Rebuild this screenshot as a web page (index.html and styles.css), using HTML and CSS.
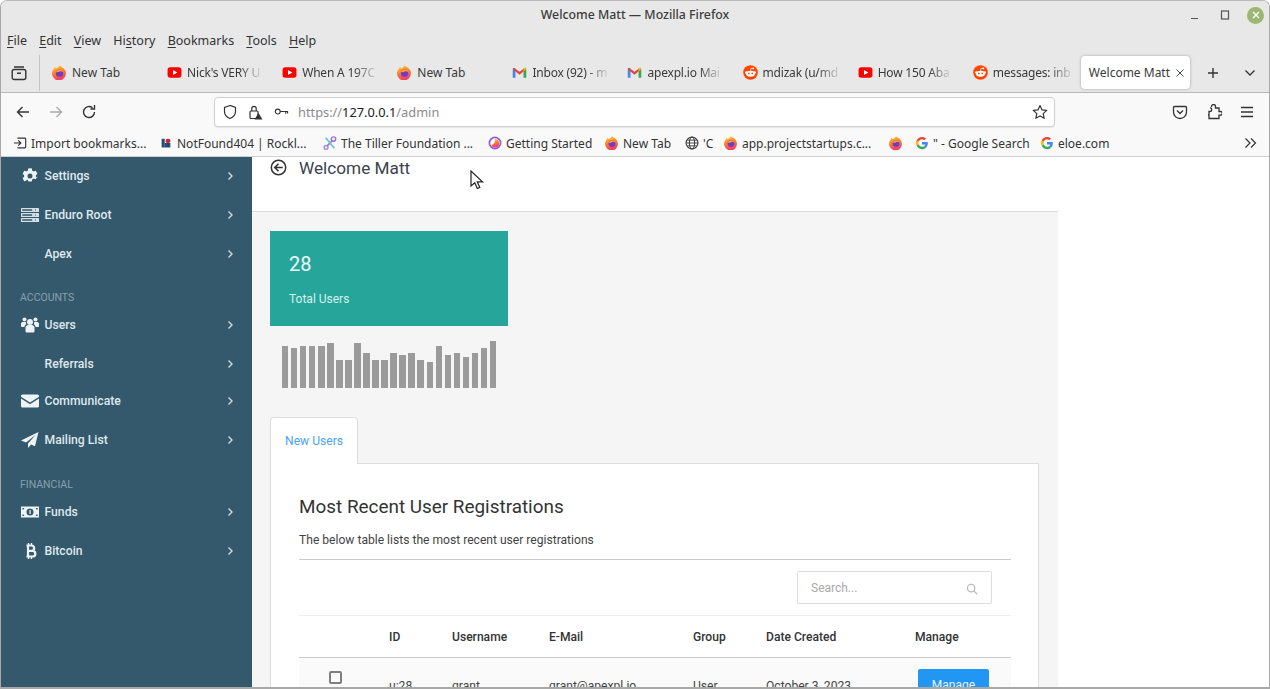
FILE: index.html
```html
<!DOCTYPE html>
<html lang="en">
<head>
<meta charset="utf-8">
<title>Welcome Matt — Mozilla Firefox</title>
<link rel="stylesheet" href="styles.css">
</head>
<body>
<svg class="defs" width="0" height="0" aria-hidden="true">
  <defs>
    <linearGradient id="fxg" x1="0.2" y1="0" x2="0.5" y2="1"><stop offset="0" stop-color="#ffcb2e"/><stop offset="0.5" stop-color="#ff7a2b"/><stop offset="1" stop-color="#f0386b"/></linearGradient>
    <symbol id="fx" viewBox="0 0 16 16"><path d="M8 .4c1.200 1.500 3.300 1.700 4.600 3.400A7.400 7.400 0 1 1 2 4C2.300 2.800 3 2.200 3.500 2c0 1 .4 1.500 1 1.800C5.500 2.800 7 2.200 8 .4z" fill="url(#fxg)"/><circle cx="8" cy="8.700" r="3.900" fill="#6f3cc7"/><path d="M4.300 7.700C5 5.500 8 4 10.600 5.600c1 .6 1.500 1.500 1.400 2.500-1-1.700-2.800-1.900-3.800-1.100-1.200.6-2.800.8-3.900.7z" fill="#ffa62e"/></symbol>
    <symbol id="yt" viewBox="0 0 16 16"><rect x=".6" y="2.500" width="14.800" height="11" rx="2.800" fill="#f00"/><path d="M6.400 5.300v5.400l4.600-2.700z" fill="#fff"/></symbol>
    <symbol id="gm" viewBox="0 0 16 16"><path d="M.8 13.500V4.300L2 2.800l1.700 1v9.700z" fill="#4285f4"/><path d="M12.300 13.500V3.800l1.700-1 1.200 1.500v9.200z" fill="#34a853"/><path d="M2 2.800 8 7.300l6-4.500L12.300 7 8 10.300 3.700 7 .8 4.300z" fill="#ea4335"/><path d="M12.300 3.800 14 2.800 15.200 4.300 12.300 7z" fill="#fbbc05"/></symbol>
    <symbol id="rd" viewBox="0 0 16 16"><circle cx="8" cy="8" r="7.800" fill="#ff4500"/><ellipse cx="8" cy="9.400" rx="4.800" ry="3.200" fill="#fff"/><circle cx="3.500" cy="8" r="1.300" fill="#fff"/><circle cx="12.500" cy="8" r="1.300" fill="#fff"/><circle cx="6.200" cy="9" r=".9" fill="#ff4500"/><circle cx="9.800" cy="9" r=".9" fill="#ff4500"/><circle cx="11" cy="3.600" r="1" fill="#fff"/><path d="M8 6.500 8.600 3.500l2.400.2" fill="none" stroke="#fff" stroke-width=".7"/></symbol>
    <symbol id="gg" viewBox="0 0 16 16"><path d="M14.600 8.200c0-.5 0-1-.1-1.400H8v2.800h3.700c-.2.900-.7 1.600-1.400 2.100l2.200 1.700c1.300-1.200 2.100-3 2.100-5.200z" fill="#4285f4"/><path d="M8 15c1.900 0 3.400-.6 4.500-1.700l-2.200-1.700c-.6.400-1.400.7-2.300.7-1.800 0-3.300-1.200-3.900-2.800L1.900 11.200C3 13.500 5.300 15 8 15z" fill="#34a853"/><path d="M4.100 9.500C4 9 3.900 8.500 3.900 8s.1-1 .2-1.500L1.900 4.800C1.300 5.800 1 6.900 1 8s.3 2.200.9 3.200z" fill="#fbbc05"/><path d="M8 3.800c1 0 1.900.4 2.600 1l2-2C11.400 1.700 9.800 1 8 1 5.300 1 3 2.500 1.900 4.800l2.200 1.700C4.700 4.900 6.200 3.800 8 3.800z" fill="#ea4335"/></symbol>
    <symbol id="chev" viewBox="0 0 8 10"><path d="M2.500 1.500 6 5 2.500 8.500" fill="none" stroke="currentColor" stroke-width="1.400"/></symbol>
  </defs>
</svg>

<div class="window">
  <header class="titlebar">
    <span></span>
    <span class="title">Welcome Matt — Mozilla Firefox</span>
    <div class="controls">
      <svg class="ctl" viewBox="0 0 12 12"><path d="M2 9.500h7" stroke="#555" stroke-width="1.200"/></svg>
      <svg class="ctl" viewBox="0 0 12 12"><rect x="2.500" y="2" width="7" height="8" fill="none" stroke="#555" stroke-width="1.200"/></svg>
      <span class="close"><svg viewBox="0 0 12 12"><path d="M3 3l6 6M9 3l-6 6" stroke="#fff" stroke-width="1.300"/></svg></span>
    </div>
  </header>

  <nav class="menubar">
    <span><u>F</u>ile</span><span><u>E</u>dit</span><span><u>V</u>iew</span><span>Hi<u>s</u>tory</span><span><u>B</u>ookmarks</span><span><u>T</u>ools</span><span><u>H</u>elp</span>
  </nav>

  <div class="tabbar">
    <div class="tabview">
      <svg viewBox="0 0 16 16" class="ico16"><rect x="1.200" y="4.500" width="13.600" height="10" rx="2" fill="none" stroke="#333" stroke-width="1.400"/><path d="M3 2h10M6 8.200h4" fill="none" stroke="#333" stroke-width="1.400"/></svg>
    </div>
    <div class="tabs">
      <div class="tab"><svg class="fav"><use href="#fx"/></svg><span class="tabtext plain">New Tab</span></div>
      <div class="tab"><svg class="fav"><use href="#yt"/></svg><span class="tabtext">Nick's VERY U</span></div>
      <div class="tab"><svg class="fav"><use href="#yt"/></svg><span class="tabtext">When A 197C</span></div>
      <div class="tab"><svg class="fav"><use href="#fx"/></svg><span class="tabtext plain">New Tab</span></div>
      <div class="tab"><svg class="fav"><use href="#gm"/></svg><span class="tabtext">Inbox (92) - m</span></div>
      <div class="tab"><svg class="fav"><use href="#gm"/></svg><span class="tabtext">apexpl.io Mai</span></div>
      <div class="tab"><svg class="fav"><use href="#rd"/></svg><span class="tabtext">mdizak (u/md</span></div>
      <div class="tab"><svg class="fav"><use href="#yt"/></svg><span class="tabtext">How 150 Aba</span></div>
      <div class="tab"><svg class="fav"><use href="#rd"/></svg><span class="tabtext">messages: inb</span></div>
      <div class="tab active"><span class="activetext">Welcome Matt</span><svg class="tabx" viewBox="0 0 10 10"><path d="M1.500 1.500l7 7M8.500 1.500l-7 7" stroke="#444" stroke-width="1"/></svg></div>
    </div>
    <svg class="newtab" viewBox="0 0 12 12"><path d="M6 1v10M1 6h10" stroke="#333" stroke-width="1.400"/></svg>
    <svg class="alltabs" viewBox="0 0 12 12"><path d="M1.500 3.500 6 8l4.500-4.500" fill="none" stroke="#333" stroke-width="1.300"/></svg>
  </div>

  <div class="navbar">
    <svg class="navico" viewBox="0 0 16 16"><path d="M14 8H2.500M7.500 3l-5 5 5 5" fill="none" stroke="#333" stroke-width="1.400"/></svg>
    <svg class="navico" viewBox="0 0 16 16"><path d="M2 8h11.500M8.500 3l5 5-5 5" fill="none" stroke="#aaa" stroke-width="1.400"/></svg>
    <svg class="navico" viewBox="0 0 16 16"><path d="M13.500 8A5.500 5.500 0 1 1 11.500 3.800M13.500 1v4h-4" fill="none" stroke="#333" stroke-width="1.400"/></svg>
    <div class="urlbar">
      <svg class="urlico" viewBox="0 0 16 16"><path d="M8 1.500 2.500 3.500v4c0 3.500 2.500 5.800 5.500 7 3-1.200 5.500-3.500 5.500-7v-4z" fill="none" stroke="#333" stroke-width="1.200"/></svg>
      <svg class="urlico" viewBox="0 0 16 16"><rect x="3" y="7" width="8" height="7.500" rx="1" fill="none" stroke="#333" stroke-width="1.200"/><path d="M4.800 7V4.500a2.200 2.200 0 0 1 4.400 0V7" fill="none" stroke="#333" stroke-width="1.200"/><path d="M11.500 9 15.500 15.500h-8z" fill="#333"/></svg>
      <svg class="urlkey" viewBox="0 0 16 16"><circle cx="4" cy="8" r="2.600" fill="none" stroke="#333" stroke-width="1.200"/><path d="M6.600 8H15M12.500 8v2.500M14.500 8v2" fill="none" stroke="#333" stroke-width="1.200"/></svg>
      <span class="url"><span class="dim">https://</span>127.0.0.1<span class="dim">/admin</span></span>
      <svg class="star" viewBox="0 0 16 16"><path d="M8 1.500l2 4.400 4.700.5-3.500 3.200 1 4.700L8 11.900l-4.200 2.400 1-4.700L1.300 6.400 6 5.900z" fill="none" stroke="#333" stroke-width="1.200" stroke-linejoin="round"/></svg>
    </div>
    <div class="navright">
      <svg class="navico2" viewBox="0 0 16 16"><path d="M2.500 2.500h11a1 1 0 0 1 1 1V8a6.500 6.500 0 0 1-13 0V3.500a1 1 0 0 1 1-1z" fill="none" stroke="#333" stroke-width="1.300"/><path d="M5 6.500l3 3 3-3" fill="none" stroke="#333" stroke-width="1.300"/></svg>
      <svg class="navico2" viewBox="0 0 16 16"><path d="M6 3.500V3a2 2 0 0 1 4 0v1.500h3.500V8H15a1.800 1.800 0 0 1 0 3.600h-1.500V15H3.500v-3.500H2.500M3.500 11.500V8h1a1.800 1.800 0 0 0 0-3.600" fill="none" stroke="#333" stroke-width="1.300" transform="translate(-.5 -.5)"/></svg>
      <svg class="navico2" viewBox="0 0 16 16"><path d="M2 3.500h12M2 8h12M2 12.500h12" stroke="#333" stroke-width="1.400"/></svg>
    </div>
  </div>

  <div class="bookmarks">
    <div class="bm bm-a"><svg class="bmico" viewBox="0 0 16 16"><path d="M1 8h8M6 5l3 3-3 3M5 2.500h8.500a1 1 0 0 1 1 1v9a1 1 0 0 1-1 1H5" fill="none" stroke="#333" stroke-width="1.300"/></svg><span>Import bookmarks...</span></div>
    <div class="bm bm-b"><svg class="bmico" viewBox="0 0 16 16"><rect x="1" y="1" width="14" height="14" rx="1" fill="#fff"/><path d="M3 3h3.500v10H3z" fill="#234a78"/><path d="M6.500 8H13v5H6.500z" fill="#234a78"/><rect x="7.500" y="3" width="5.500" height="5" rx="2" fill="#d0233a"/></svg><span>NotFound404 | Rockl...</span></div>
    <div class="bm bm-c"><svg class="bmico" viewBox="0 0 16 16"><circle cx="12" cy="3.500" r="2.500" fill="none" stroke="#9a6fd8" stroke-width="1.700"/><circle cx="3.500" cy="13" r="2.200" fill="none" stroke="#a48bdc" stroke-width="1.700"/><path d="M10.500 5.500 5 11" stroke="#9a6fd8" stroke-width="1.800"/><path d="M3 2l10 12" stroke="#62c6cf" stroke-width="2"/></svg><span>The Tiller Foundation ...</span></div>
    <div class="bm bm-d"><svg class="bmico" viewBox="0 0 16 16"><circle cx="8" cy="8" r="6.400" fill="#fff" stroke="#8a5cf0" stroke-width="2"/><path d="M8 3.500a4.800 4.800 0 1 1-4.300 6.800A6 6 0 0 0 8 3.500z" fill="url(#fxg)"/></svg><span>Getting Started</span></div>
    <div class="bm bm-e"><svg class="bmico"><use href="#fx"/></svg><span>New Tab</span></div>
    <div class="bm bm-f"><svg class="bmico" viewBox="0 0 16 16"><circle cx="8" cy="8" r="6.800" fill="none" stroke="#333" stroke-width="1.200"/><ellipse cx="8" cy="8" rx="3" ry="6.800" fill="none" stroke="#333" stroke-width="1.100"/><path d="M1.500 8h13M2.500 4.700h11M2.500 11.300h11" stroke="#333" stroke-width="1"/></svg><span>'C</span></div>
    <div class="bm bm-g"><svg class="bmico"><use href="#fx"/></svg><span>app.projectstartups.c...</span></div>
    <div class="bm bm-h"><svg class="bmico"><use href="#fx"/></svg></div>
    <div class="bm bm-i"><svg class="bmico"><use href="#gg"/></svg><span>" - Google Search</span></div>
    <div class="bm bm-j"><svg class="bmico"><use href="#gg"/></svg><span>eloe.com</span></div>
    <svg class="bmmore" viewBox="0 0 14 12"><path d="M1.500 1.500 6 6l-4.500 4.500M7 1.500 11.500 6 7 10.500" fill="none" stroke="#333" stroke-width="1.200"/></svg>
  </div>

  <div class="page">
    <aside class="sidebar">
      <a class="item">
        <svg class="sico" viewBox="-32 0 576 512"><path fill="currentColor" d="M487 315l-42-25a192 192 0 0 0 0-68l42-25c5-3 7-8 5-14a248 248 0 0 0-55-95c-4-4-10-5-15-2l-42 25a188 188 0 0 0-59-34V28c0-6-4-10-9-11a250 250 0 0 0-110 0c-5 1-9 5-9 11v49a194 194 0 0 0-59 34L92 86c-5-3-11-2-15 2a246 246 0 0 0-55 95c-2 6 0 11 5 14l42 25a192 192 0 0 0 0 68l-42 25c-5 3-7 8-5 14a248 248 0 0 0 55 95c4 4 10 5 15 2l42-25a188 188 0 0 0 59-34v49c0 6 4 10 9 11a250 250 0 0 0 110 0c5-1 9-5 9-11v-49a194 194 0 0 0 59-34l42 25c5 3 11 2 15-2a246 246 0 0 0 55-95c2-6 0-11-5-14zM256 336a80 80 0 1 1 0-160 80 80 0 0 1 0 160z"/></svg>
        <span class="label">Settings</span><svg class="chev"><use href="#chev"/></svg>
      </a>
      <a class="item">
        <svg class="sico" viewBox="0 0 18 16"><g fill="#d5dfe4"><rect y="1" width="18" height="4" rx=".5"/><rect y="6" width="18" height="4" rx=".5"/><rect y="11" width="18" height="4" rx=".5"/></g><path fill="#34586c" d="M1.200 2.200h10v1.600h-10zM1.200 7.200h10v1.600h-10zM1.200 12.200h10v1.600h-10zM14 2.500h1v1h-1zM14 7.500h1v1h-1zM14 12.500h1v1h-1z"/></svg>
        <span class="label">Enduro Root</span><svg class="chev"><use href="#chev"/></svg>
      </a>
      <a class="item">
        <span class="sico"></span>
        <span class="label">Apex</span><svg class="chev"><use href="#chev"/></svg>
      </a>
      <div class="sect">ACCOUNTS</div>
      <a class="item">
        <svg class="sico" viewBox="0 0 18 16"><g fill="currentColor"><circle cx="9" cy="5" r="3"/><circle cx="3.500" cy="2.500" r="2"/><circle cx="14.500" cy="2.500" r="2"/><path d="M4.500 10.500c0-1.500 1.500-2.500 2.500-2.500h4c1 0 2.500 1 2.500 2.500v3.500c0 1-.6 1.500-1.500 1.500H6c-.9 0-1.500-.5-1.500-1.500z"/><path d="M0 7C0 5.500 1 5 2 5h3c-.3.600-.2 1.600.3 2.200C4 7.700 3.500 9 3.500 10H1C.3 10 0 9.500 0 9zM18 7c0-1.500-1-2-2-2h-3c.3.600.2 1.600-.3 2.200 1.300.5 1.800 1.800 1.800 2.800H17c.7 0 1-.5 1-1z"/></g></svg>
        <span class="label">Users</span><svg class="chev"><use href="#chev"/></svg>
      </a>
      <a class="item short">
        <span class="sico"></span>
        <span class="label">Referrals</span><svg class="chev"><use href="#chev"/></svg>
      </a>
      <a class="item">
        <svg class="sico" viewBox="0 0 18 16"><path fill="currentColor" d="M1.500 1.500h15A1.500 1.500 0 0 1 18 3v.7L9 9.500 0 3.700V3a1.500 1.500 0 0 1 1.500-1.500zM0 5.500l9 5.800 9-5.800V13a1.500 1.500 0 0 1-1.500 1.500h-15A1.500 1.500 0 0 1 0 13z"/></svg>
        <span class="label">Communicate</span><svg class="chev"><use href="#chev"/></svg>
      </a>
      <a class="item">
        <svg class="sico" viewBox="0 0 18 16"><path fill="currentColor" d="M17.500 0 0 8.500 5 10.500 14.500 3 7 11.500V16l3-3.500 4 1.800z"/></svg>
        <span class="label">Mailing List</span><svg class="chev"><use href="#chev"/></svg>
      </a>
      <div class="sect sect2">FINANCIAL</div>
      <a class="item">
        <svg class="sico" viewBox="0 0 18 16"><path fill="currentColor" fill-rule="evenodd" d="M0 2.500h18v11H0zM1.500 4v8h1.800a1.800 1.800 0 0 0-1.800-1.800V5.800A1.800 1.800 0 0 0 3.300 4zm13.200 0a1.800 1.800 0 0 0 1.800 1.800v4.400a1.800 1.800 0 0 0-1.800 1.800h1.800V4zM9 4.500a3.500 3.500 0 1 0 0 7 3.500 3.500 0 0 0 0-7z"/><path fill="currentColor" d="M8.500 6h1.200v4h-1.200z"/></svg>
        <span class="label">Funds</span><svg class="chev"><use href="#chev"/></svg>
      </a>
      <a class="item">
        <svg class="sico" viewBox="0 0 18 16"><path fill="none" stroke="currentColor" stroke-width="2.200" d="M5.500 2.500h5a2.600 2.600 0 0 1 0 5.300h-4h5a2.800 2.800 0 0 1 0 5.700h-6M7 2.500v11"/><path fill="none" stroke="currentColor" stroke-width="1.400" d="M7.500 0v3M10.500 0v3M7.500 13v3M10.500 13v3"/></svg>
        <span class="label">Bitcoin</span><svg class="chev"><use href="#chev"/></svg>
      </a>
    </aside>

    <main class="main">
      <div class="pagehead">
        <svg class="back" viewBox="0 0 16 16"><circle cx="8" cy="8" r="6.800" fill="none" stroke="#333" stroke-width="1.400"/><path d="M12 8H4.500M8 4.500 4.500 8 8 11.500" fill="none" stroke="#333" stroke-width="1.500"/></svg>
        <h1>Welcome Matt</h1>
      </div>
      <div class="body">
        <div class="stat">
          <div class="statnum">28</div>
          <div class="statlabel">Total Users</div>
        </div>
        <div class="spark">
          <i style="height:42px"></i><i style="height:40px"></i><i style="height:42px"></i><i style="height:42px"></i><i style="height:42px"></i><i style="height:45px"></i><i style="height:28px"></i><i style="height:28px"></i><i style="height:45px"></i><i style="height:35px"></i><i style="height:28px"></i><i style="height:28px"></i><i style="height:35px"></i><i style="height:33px"></i><i style="height:35px"></i><i style="height:28px"></i><i style="height:26px"></i><i style="height:42px"></i><i style="height:33px"></i><i style="height:35px"></i><i style="height:31px"></i><i style="height:35px"></i><i style="height:40px"></i><i style="height:47px"></i>
        </div>
        <div class="tabstrip"><div class="ptab">New Users</div></div>
        <section class="panel">
          <h2>Most Recent User Registrations</h2>
          <p class="sub">The below table lists the most recent user registrations</p>
          <div class="searchrow">
            <div class="search"><span>Search...</span>
              <svg class="mag" viewBox="0 0 14 14"><circle cx="6" cy="6" r="4.300" fill="none" stroke="#bbb" stroke-width="1.500"/><path d="M9.200 9.200 13 13" stroke="#bbb" stroke-width="1.600"/></svg>
            </div>
          </div>
          <div class="grid ghead">
            <span></span><span>ID</span><span>Username</span><span>E-Mail</span><span>Group</span><span>Date Created</span><span>Manage</span>
          </div>
          <div class="grid grow">
            <span class="check"><i class="box"></i><small>iD</small></span><span>u:28</span><span>grant</span><span>grant@apexpl.io</span><span>User</span><span>October 3, 2023</span><span><a class="btn">Manage</a></span>
          </div>
        </section>
      </div>
    </main>
  </div>
</div>
<svg class="cursor" viewBox="0 0 14 20"><path d="M1 1v15l3.800-3.300 2.500 5.800 2.500-1.100-2.500-5.600H12.500z" fill="#fff" stroke="#222" stroke-width="1.200"/></svg>
</body>
</html>
```
FILE: styles.css
```css
* { box-sizing: border-box; }
html, body { margin: 0; padding: 0; height: 100%; overflow: hidden; background: #fff; }
body { font-family: "Noto Sans", sans-serif; color: #333; position: relative; }
.defs { position: absolute; }

.window {
  width: 1270px; height: 689px; display: flex; flex-direction: column; overflow: hidden;
  border: 1px solid #a8a8a8; border-bottom: 2px solid #a8a8a8; border-top-color: #bbb;
  border-radius: 7px 7px 0 0; background: #e8e8e8;
}

.titlebar {
  height: 28px; flex: none; display: grid; grid-template-columns: 1fr auto 1fr; align-items: center;
  background: #e8e8e8;
}
.title { font-size: 12.300px; font-weight: 500; color: #3c3c3c; margin-bottom: 1px; }
.controls { display: flex; align-items: center; justify-content: flex-end; gap: 18px; padding: 0 5px 0 0; }
.ctl { width: 12px; height: 12px; }
.close { width: 17px; height: 17px; margin-left: -2px; border-radius: 50%; background: #9bb873; display: flex; align-items: center; justify-content: center; }
.close svg { width: 12px; height: 12px; }

.menubar { height: 24px; flex: none; display: flex; align-items: center; gap: 12.200px; padding: 0 0 2px 6px; font-size: 12.500px; color: #333; background: #e8e8e8; }
.menubar u { text-underline-offset: 2px; }

.tabbar { height: 40px; flex: none; display: flex; align-items: center; background: #e8e8e8; border-bottom: 1px solid #b8b8b8; position: relative; }
.tabview { width: 39px; height: 36px; flex: none; display: flex; align-items: center; justify-content: center; border-right: 1px solid #c4c4c4; }
.ico16 { width: 16px; height: 16px; margin-left: -2px; }
.tabs { display: flex; align-items: center; padding-left: 12px; }
.tab { width: 115.100px; height: 32px; flex: none; display: flex; align-items: center; gap: 5px; overflow: hidden; }
.fav { width: 15px; height: 15px; flex: none; }
.tabtext {
  font-size: 12px; white-space: nowrap; color: #3a3a3a; flex: none; letter-spacing: -.2px;
  -webkit-mask-image: linear-gradient(to right, #000 72%, rgba(0,0,0,.15) 100%); mask-image: linear-gradient(to right, #000 72%, rgba(0,0,0,.15) 100%);
}
.tabtext.plain { -webkit-mask-image: none; mask-image: none; letter-spacing: 0; }
.tab.active { width: 109px; height: 33px; margin-left: -7px; padding: 0 6px 0 8px; background: #fff; border-radius: 4px; box-shadow: 0 0 3px rgba(0,0,0,.3); gap: 2px; }
.activetext { font-size: 12px; white-space: nowrap; color: #3a3a3a; }
.tabx { width: 10px; height: 10px; flex: none; margin-left: 3px; }
.newtab { width: 12px; height: 12px; margin-left: 17px; flex: none; }
.alltabs { width: 12px; height: 12px; margin-left: 25px; flex: none; }

.navbar { height: 37px; flex: none; display: flex; align-items: center; background: #f9f9fa; padding-left: 14px; }
.navico { width: 16px; height: 16px; flex: none; margin-right: 17px; }
.urlbar { width: 841px; height: 30px; margin-left: 100px; flex: none; display: flex; align-items: center; background: #fff; border: 1px solid #cfcfcf; border-radius: 4px; padding: 0 6px 0 7px; box-shadow: 0 1px 1px rgba(0,0,0,.08); }
.urlico { width: 16px; height: 16px; flex: none; margin-right: 9px; }
.urlico + .urlkey { margin-left: 2px; }
.urlkey { width: 15px; height: 15px; flex: none; margin-right: 9px; }
.url { flex: 1; font-size: 12.800px; color: #222; }
.dim { color: #8a8a8a; }
.star { width: 16px; height: 16px; flex: none; }
.navright { display: flex; align-items: center; gap: 17.500px; margin-left: 117px; }
.navico2 { width: 16px; height: 16px; flex: none; }

.bookmarks { height: 27px; flex: none; display: flex; align-items: center; background: #f9f9fa; border-bottom: 1px solid #d0d0d0; padding-left: 12px; font-size: 12px; color: #333; }
.bm { display: flex; align-items: center; gap: 4px; flex: none; white-space: nowrap; }
.bmico { width: 14px; height: 14px; flex: none; }
.bm-a { width: 146px; }
.bm-b { width: 164px; }
.bm-c { width: 165px; }
.bm-d { width: 117px; }
.bm-e { width: 80px; }
.bm-f { width: 39px; }
.bm-g { width: 165px; }
.bm-h { width: 26px; }
.bm-i { width: 125px; }
.bm-j { width: 204px; }
.bmmore { width: 14px; height: 12px; flex: none; }

.page { flex: 1; min-height: 0; display: flex; background: #fff; overflow: hidden; font-family: Roboto, sans-serif; }
.sidebar { width: 251px; flex: none; background: #34586c; color: #e4edf1; margin-top: -1px; }
.item { height: 39px; display: flex; align-items: center; padding-left: 20px; padding-right: 18px; }
.item.short { height: 37px; padding-top: 3px; }
.sico { width: 18px; height: 16px; flex: none; display: block; color: #eef3f5; }
.label { flex: 1; font-size: 12.200px; font-weight: 500; margin-left: 5.500px; color: #dfe8ec; }
.chev { width: 8px; height: 10px; flex: none; color: #cfdbe1; }
.sect { height: 32px; padding: 19px 0 0 19px; font-size: 10.500px; line-height: 12px; color: #86a0ae; }
.sect.sect2 { height: 33px; padding-top: 20px; }

.main { width: 806px; flex: none; background: #f5f5f5; display: flex; flex-direction: column; }
.pagehead { height: 55px; flex: none; background: #fff; border-bottom: 1px solid #ddd; display: flex; align-items: flex-start; padding: 1px 0 0 18px; }
.back { width: 17px; height: 17px; margin-top: 1px; flex: none; }
h1 { margin: 0 0 0 12px; font-size: 17.200px; font-weight: 400; line-height: 21px; color: #3b4250; }
.body { padding: 19px 18px 0 18px; }
.stat { width: 238px; height: 95px; background: #26a69a; color: #fff; padding: 21px 18px 0 19px; }
.statnum { font-size: 20px; line-height: 24px; color: #f0faf9; }
.statlabel { font-size: 12px; line-height: 14px; margin-top: 16px; color: #d8f0ee; }
.spark { display: flex; align-items: flex-end; gap: 2.650px; height: 47px; margin: 15px 0 0 12px; }
.spark i { display: block; width: 6.400px; background: #9b9b9b; flex: none; }
.tabstrip { display: flex; margin-top: 29px; }
.ptab { width: 87.500px; height: 47px; background: #fff; border: 1px solid #ddd; border-bottom: 0; border-radius: 4px 4px 0 0; color: #4aa3f0; font-size: 12.100px; padding-top: 16px; padding-left: 14px; position: relative; z-index: 1; margin-bottom: -1px; }
.panel { width: 769px; background: #fff; border: 1px solid #ddd; border-bottom: 0; padding: 31px 27px 0 28px; height: 260px; overflow: hidden; }
h2 { margin: 0; font-size: 18.900px; font-weight: 400; line-height: 24px; color: #333; }
.sub { margin: 13px 0 0; font-size: 12.100px; line-height: 16px; padding-bottom: 11px; border-bottom: 1px solid #ccc; color: #444; }
.searchrow { height: 56px; display: flex; justify-content: flex-end; padding: 11px 19px 0 0; border-bottom: 1px solid #eee; }
.search { width: 195px; height: 33px; border: 1px solid #ddd; border-radius: 2px; display: flex; align-items: center; justify-content: space-between; padding: 0 13px; font-size: 12px; color: #aaa; }
.mag { width: 12px; height: 12px; margin-top: 2px; }
.grid { display: grid; grid-template-columns: 90px 63px 97px 144px 73px 149px 1fr; align-items: center; font-size: 12.100px; }
.ghead { height: 42px; font-weight: 500; color: #333; border-bottom: 1px solid #ccc; }
.grow { height: 60px; background: #fafafa; align-items: start; padding-top: 11px; color: #444; }
.grow > span { padding-top: 10px; }
.grow > span.check { padding: 2px 0 0 30px; display: block; }
.box { display: block; width: 13px; height: 13px; border: 2px solid #808080; border-radius: 2px; background: #fff; }
.check small { display: block; font-size: 9px; margin: 2px 0 0 14px; color: #444; }
.grow > span:last-child { padding-top: 0; }
.btn { display: block; width: 71px; height: 32px; margin-left: 3px; background: #2196f3; color: #e8f4fe; border-radius: 2px; text-align: center; line-height: 32px; font-size: 12px; }

.cursor { position: absolute; left: 470px; top: 170px; width: 14px; height: 20px; }
```
